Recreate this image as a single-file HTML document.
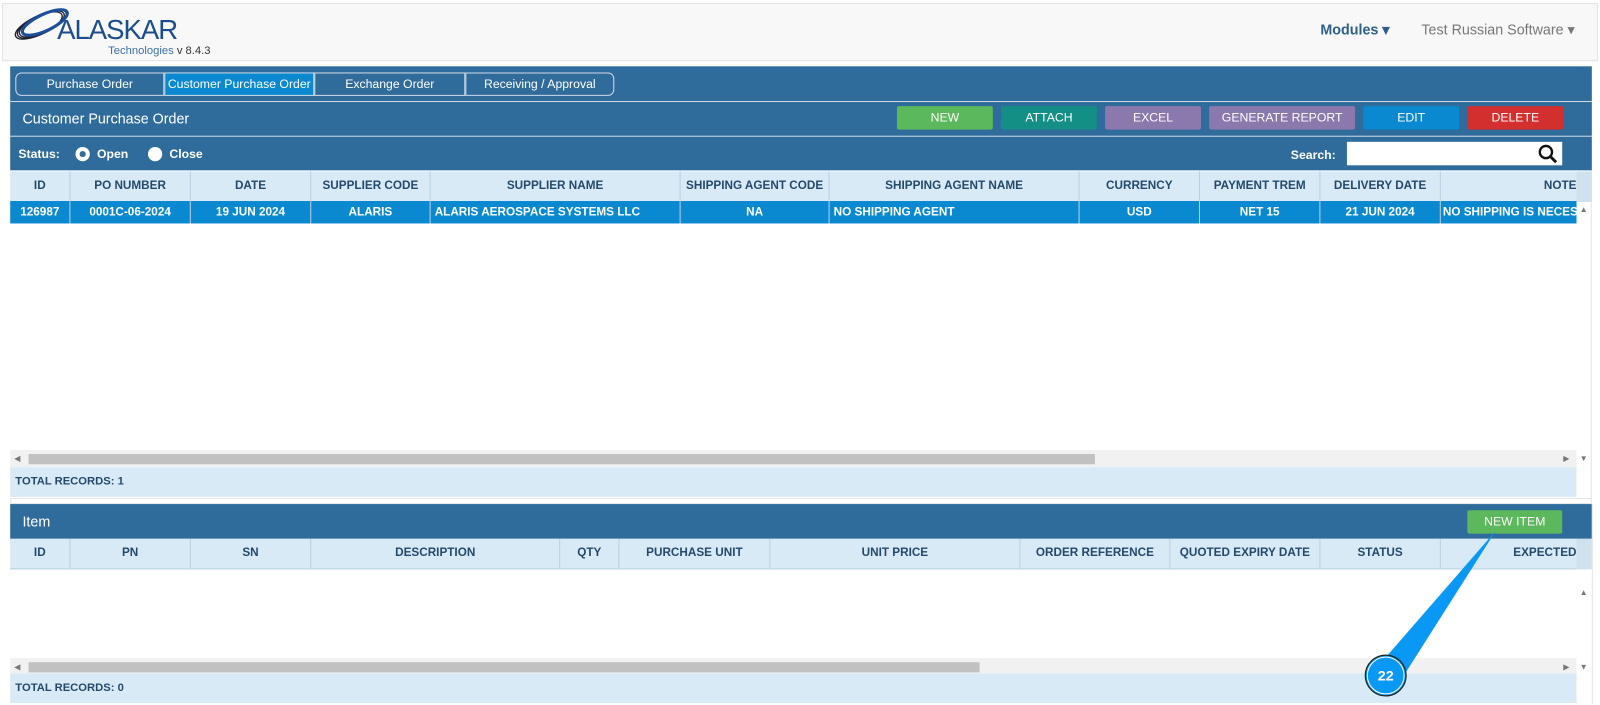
<!DOCTYPE html>
<html><head><meta charset="utf-8"><style>
*{box-sizing:border-box;margin:0;padding:0}
body{width:1600px;height:705px;background:#fff;font-family:"Liberation Sans",Arial,sans-serif;overflow:hidden;font-size:12px}
#w{position:absolute;left:0;top:0;width:1568px;height:691px;transform:scale(1.0204);transform-origin:0 0}
.a{position:absolute}
.hdr{left:2px;top:3px;width:1564px;height:57px;background:#f8f8f8;border:1px solid #e3e3e3}
.bar{background:#2f6b9b;color:#fff}
.tab{position:absolute;top:71px;height:23px;color:#fff;font-size:12px;text-align:center;line-height:21px;border:1px solid #cfdbe6;}
.btn{position:absolute;top:104px;height:23px;color:#fff;font-size:12px;text-align:center;line-height:23px;border-radius:2px}
.row{position:absolute;left:10px;width:1535px;display:flex}
.row div{flex:none;text-align:center;overflow:hidden;white-space:nowrap;border-right:1px solid #b8cfe0}
.th{background:#d9eaf7;color:#234a6b;font-size:11.5px;font-weight:bold;height:30px;line-height:29px;border-bottom:1px solid #b8cfe0}
.td{background:#0a88d0;color:#fff;font-size:11.5px;font-weight:bold;height:22px;line-height:22px}
.tot{position:absolute;left:10px;width:1535px;height:29px;background:#d9eaf7;color:#234a6b;font-size:11px;font-weight:bold;line-height:29px;padding-left:5px}
.sb{position:absolute;left:10px;width:1535px;height:17px;background:#f1f1f1}
.sbt{position:absolute;top:4px;height:10px;background:#c1c1c1;left:18px}
.ar{position:absolute;font-size:8px;color:#777}
</style></head><body><div id="w">
<div class="a hdr"></div>
<svg class="a" style="left:10px;top:8px" width="60" height="36" viewBox="0 0 60 36"><g fill="none" stroke="#223" stroke-width="1.3"><ellipse cx="28" cy="17" rx="25" ry="9" transform="rotate(-25 28 17)"/><ellipse cx="30" cy="16" rx="25" ry="9" transform="rotate(-25 30 16)"/><ellipse cx="32" cy="15" rx="25" ry="9" transform="rotate(-25 32 15)"/><ellipse cx="34" cy="14" rx="24" ry="8" transform="rotate(-25 34 14)" stroke="#1b4f9c" stroke-width="3"/></g></svg>
<div class="a" style="left:56px;top:14px;font-size:27px;color:#1c4e8e;letter-spacing:-1px">ALASKAR</div>
<div class="a" style="left:106px;top:44px;font-size:11px;color:#3d6fb0">Technologies <span style="color:#333">v 8.4.3</span></div>
<div class="a" style="left:1294px;top:21px;font-size:14px;color:#2e5f8c;font-weight:bold">Modules ▾</div>
<div class="a" style="left:1393px;top:21px;font-size:14px;color:#777">Test Russian Software ▾</div>

<div class="a bar" style="left:10px;top:65px;width:1550px;height:102px"></div>
<div class="tab" style="left:15px;width:146px;border-radius:6px 0 0 6px">Purchase Order</div>
<div class="tab" style="left:161px;width:147px;background:#0a88d0">Customer Purchase Order</div>
<div class="tab" style="left:308px;width:148px">Exchange Order</div>
<div class="tab" style="left:456px;width:146px;border-radius:0 6px 6px 0">Receiving / Approval</div>
<div class="a" style="left:10px;top:99px;width:1550px;height:1px;background:#cfdbe6"></div>
<div class="a" style="left:22px;top:108px;color:#fff;font-size:14px">Customer Purchase Order</div>
<div class="btn" style="left:879px;width:94px;background:#5cb85c">NEW</div>
<div class="btn" style="left:981px;width:94px;background:#148f85">ATTACH</div>
<div class="btn" style="left:1083px;width:94px;background:#8b78ad">EXCEL</div>
<div class="btn" style="left:1185px;width:143px;background:#8b78ad">GENERATE REPORT</div>
<div class="btn" style="left:1336px;width:94px;background:#0a88d0">EDIT</div>
<div class="btn" style="left:1438px;width:94px;background:#d32f2f">DELETE</div>
<div class="a" style="left:10px;top:133px;width:1550px;height:1px;background:#cfdbe6"></div>
<div class="a" style="left:18px;top:144px;color:#fff;font-weight:bold;font-size:12px">Status:</div>
<div class="a" style="left:74px;top:144px;width:14px;height:14px;border-radius:50%;background:#fff"><div class="a" style="left:4px;top:4px;width:6px;height:6px;border-radius:50%;background:#2f6b9b"></div></div>
<div class="a" style="left:95px;top:144px;color:#fff;font-weight:bold">Open</div>
<div class="a" style="left:145px;top:144px;width:14px;height:14px;border-radius:50%;background:#fff"></div>
<div class="a" style="left:166px;top:144px;color:#fff;font-weight:bold">Close</div>
<div class="a" style="left:1265px;top:145px;color:#fff;font-weight:bold">Search:</div>
<div class="a" style="left:1320px;top:139px;width:211px;height:23px;background:#fff"></div>
<svg class="a" style="left:1507px;top:141px" width="20" height="20" viewBox="0 0 20 20"><circle cx="8" cy="8" r="6" fill="none" stroke="#111" stroke-width="2.3"/><path d="M12.5 12.5L18 18" stroke="#111" stroke-width="2.8"/></svg>

<div class="a" style="left:10px;top:167px;width:1550px;height:321px;background:#fff;border-right:1px solid #e5e5e5"></div>
<div class="row th" style="top:168px"><div style="width:59px">ID</div><div style="width:118px">PO NUMBER</div><div style="width:118px">DATE</div><div style="width:117px">SUPPLIER CODE</div><div style="width:245px">SUPPLIER NAME</div><div style="width:146px">SHIPPING AGENT CODE</div><div style="width:245px">SHIPPING AGENT NAME</div><div style="width:118px">CURRENCY</div><div style="width:118px">PAYMENT TREM</div><div style="width:118px">DELIVERY DATE</div><div style="width:133px;text-align:right;border:0">NOTE</div></div>
<div class="a" style="left:1545px;top:168px;width:15px;height:30px;background:#d0e1ee"></div>
<div class="row td" style="top:197px"><div style="width:59px">126987</div><div style="width:118px">0001C-06-2024</div><div style="width:118px">19 JUN 2024</div><div style="width:117px">ALARIS</div><div style="width:245px;text-align:left;padding-left:4px">ALARIS AEROSPACE SYSTEMS LLC</div><div style="width:146px">NA</div><div style="width:245px;text-align:left;padding-left:4px">NO SHIPPING AGENT</div><div style="width:118px">USD</div><div style="width:118px">NET 15</div><div style="width:118px">21 JUN 2024</div><div style="width:133px;text-align:left;padding-left:2px;border:0">NO SHIPPING IS NECESSARY</div></div>
<div class="ar" style="left:1548px;top:201px">▲</div>
<div class="sb" style="top:441px"><div class="sbt" style="width:1045px"></div></div>
<div class="ar" style="left:14px;top:445px">◀</div><div class="ar" style="left:1532px;top:445px">▶</div><div class="ar" style="left:1548px;top:445px">▼</div>
<div class="tot" style="top:458px">TOTAL RECORDS: 1</div>
<div class="a" style="left:10px;top:488px;width:1550px;height:6px;background:#fff;border:1px solid #e5e5e5"></div>

<div class="a bar" style="left:10px;top:494px;width:1550px;height:34px"></div>
<div class="a" style="left:22px;top:503px;color:#fff;font-size:14px">Item</div>
<div class="btn" style="left:1438px;top:500px;width:93px;height:23px;background:#5cb85c">NEW ITEM</div>
<div class="row th" style="top:528px"><div style="width:59px">ID</div><div style="width:118px">PN</div><div style="width:118px">SN</div><div style="width:244px">DESCRIPTION</div><div style="width:58px">QTY</div><div style="width:148px">PURCHASE UNIT</div><div style="width:245px">UNIT PRICE</div><div style="width:147px">ORDER REFERENCE</div><div style="width:147px">QUOTED EXPIRY DATE</div><div style="width:118px">STATUS</div><div style="width:133px;text-align:right;border:0">EXPECTED</div></div>
<div class="a" style="left:1545px;top:528px;width:15px;height:30px;background:#d0e1ee"></div>
<div class="ar" style="left:1548px;top:576px">▲</div>
<div class="sb" style="top:645px"><div class="sbt" style="width:932px"></div></div>
<div class="ar" style="left:14px;top:649px">◀</div><div class="ar" style="left:1532px;top:649px">▶</div><div class="ar" style="left:1548px;top:649px">▼</div>
<div class="tot" style="top:660px">TOTAL RECORDS: 0</div>
<div class="a" style="left:1560px;top:494px;width:1px;height:196px;background:#e5e5e5"></div>

<svg class="a" style="left:0;top:0" width="1568" height="691"><path d="M1353 650 L1466 520 L1377 660 Z" fill="#0a98f5"/><circle cx="1358" cy="662" r="20" fill="#0a98f5" stroke="#222" stroke-width="1.2"/><circle cx="1358" cy="662" r="18" fill="none" stroke="#fff" stroke-width="1"/><text x="1358" y="667" fill="#fff" font-size="14" font-weight="bold" text-anchor="middle" font-family="Liberation Sans">22</text></svg>
</div></body></html>
